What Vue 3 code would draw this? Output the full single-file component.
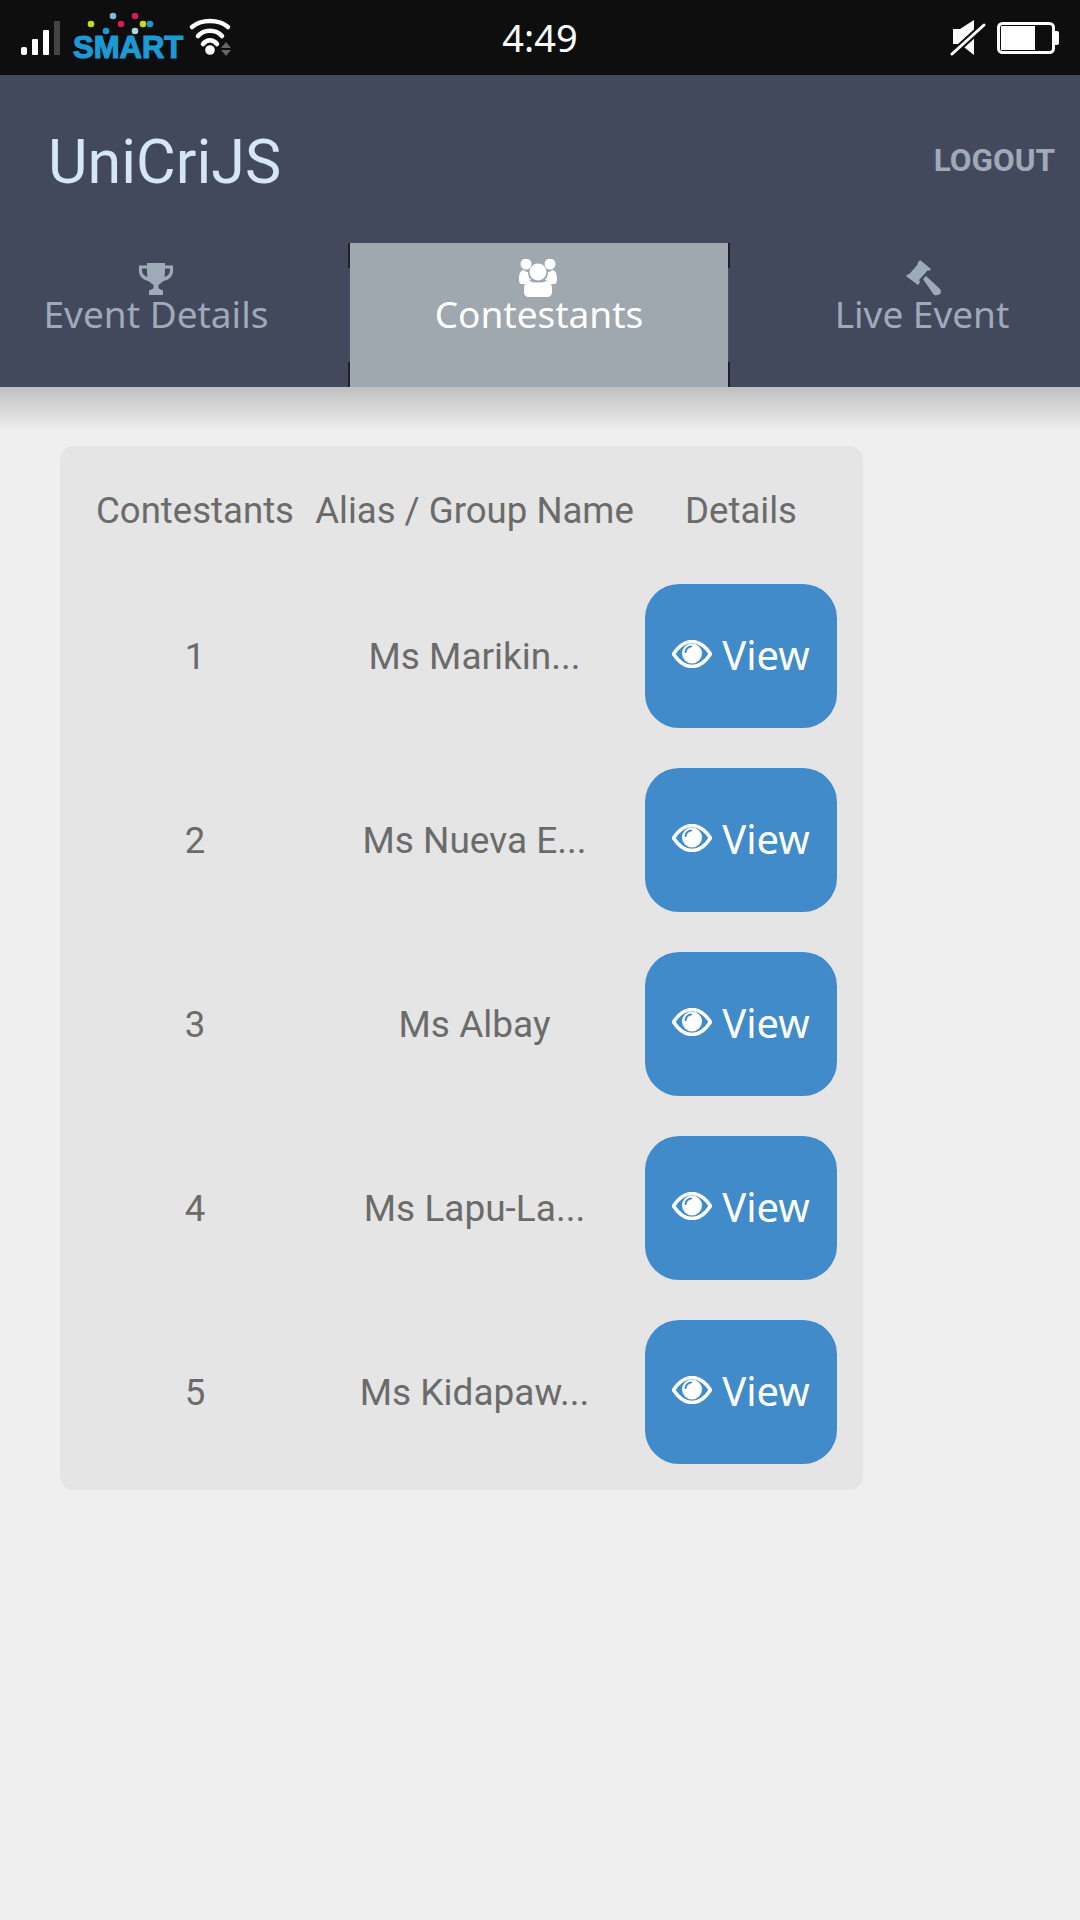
<template>
  <div class="page">
    <div class="status-bar">
      <div class="status-left">
        <svg class="signal" width="40" height="34" viewBox="0 0 40 34">
          <rect x="0" y="26" width="6" height="8" rx="2" fill="#fff" />
          <rect x="11" y="18" width="6" height="16" rx="1" fill="#fff" />
          <rect x="22" y="9" width="6" height="25" rx="1" fill="#fff" />
          <rect x="33" y="0" width="6" height="34" fill="#444" />
        </svg>
        <div class="smart">
          <svg class="dots" width="110" height="24" viewBox="0 0 110 24">
            <circle cx="18" cy="12" r="3.300" fill="#c9d820" />
            <circle cx="40" cy="4" r="3.300" fill="#7cbcdc" />
            <circle cx="48" cy="12" r="3.300" fill="#d81b5a" />
            <circle cx="62" cy="4" r="3.300" fill="#d81b5a" />
            <circle cx="70" cy="12" r="3.300" fill="#c9d820" />
            <circle cx="77" cy="12" r="3.300" fill="#1b9ad0" />
            <circle cx="33" cy="19" r="3.300" fill="#1b9ad0" />
            <circle cx="62" cy="19" r="3.300" fill="#a8dcdc" />
          </svg>
          <span class="smart-text">SMART</span>
        </div>
        <svg class="wifi" width="46" height="40" viewBox="0 0 46 40">
          <path d="M4 9 C13 1 31 1 40 9" fill="none" stroke="#fff" stroke-width="4.500" stroke-linecap="round" />
          <path d="M10 18 C16 11 28 11 34 18" fill="none" stroke="#fff" stroke-width="4.500" stroke-linecap="round" />
          <path d="M15 26 C19 21 25 21 29 26" fill="none" stroke="#fff" stroke-width="4.500" stroke-linecap="round" />
          <circle cx="22" cy="32" r="4.800" fill="#fff" />
          <path d="M33 30 h10 l-5 -6z M33 32 h10 l-5 6z" fill="#666" />
        </svg>
      </div>
      <div class="clock">4:49</div>
      <div class="status-right">
        <svg class="mute" width="36" height="38" viewBox="0 0 36 38">
          <path d="M3 10 H10 L24 1 V36 L10 25 H3 Z" fill="#fff" />
          <path d="M0 37 L35 5" stroke="#0e0e0e" stroke-width="7" />
          <path d="M2 35 L34 6" stroke="#fff" stroke-width="3" stroke-linecap="round" />
        </svg>
        <svg class="battery" width="62" height="34" viewBox="0 0 62 34">
          <rect x="1.500" y="2.500" width="55" height="29" rx="4" fill="none" stroke="#fff" stroke-width="3" />
          <rect x="4" y="5" width="34" height="24" fill="#fff" />
          <path d="M57 10 h3 a2 2 0 0 1 2 2 v10 a2 2 0 0 1 -2 2 h-3z" fill="#fff" />
        </svg>
      </div>
    </div>

    <header class="app-header">
      <div class="title-row">
        <div class="app-title">UniCriJS</div>
        <div class="logout">LOGOUT</div>
      </div>
      <div class="tabs">
        <div
          v-for="tab in tabs"
          :key="tab.label"
          class="tab"
          :class="{ active: tab.active }"
        >
          <svg class="tab-icon" viewBox="0 0 40 38" width="40" height="38" fill="currentColor">
            <path :d="tab.icon" fill-rule="evenodd" />
          </svg>
          <span class="tab-label">{{ tab.label }}</span>
        </div>
      </div>
    </header>

    <div class="content">
      <div class="card">
        <div class="cell head">Contestants</div>
        <div class="cell head">Alias / Group Name</div>
        <div class="cell head">Details</div>
        <template v-for="row in rows" :key="row.no">
          <div class="cell">{{ row.no }}</div>
          <div class="cell name">{{ row.name }}</div>
          <div class="cell">
            <button class="view-btn">
              <svg width="40" height="28" viewBox="0 0 40 28">
                <path d="M1.500 14 C8 4 14 1.500 20 1.500 C26 1.500 32 4 38.500 14 C32 24 26 26.500 20 26.500 C14 26.500 8 24 1.500 14Z" fill="none" stroke="#fff" stroke-width="3.500" />
                <circle cx="20" cy="13.500" r="10" fill="#fff" />
                <path d="M13.500 12 A6.500 6.500 0 0 1 19 6.500" fill="none" stroke="#428bca" stroke-width="2" stroke-linecap="round" />
              </svg>
              <span>View</span>
            </button>
          </div>
        </template>
      </div>
    </div>
  </div>
</template>

<script setup>
const trophy = 'M11 4 H29 V6.500 H37 V12 C37 17 33 21 27.500 22 C26 23.500 23.500 25 22.500 26 V29 C23 30 25 30.500 27 31.500 V36 H13 V31.500 C15 30.500 17 30 17.500 29 V26 C16.500 25 14 23.500 12.500 22 C7 21 3 17 3 12 V6.500 H11 Z M6 9.500 V12 C6 14.500 8 17 11.500 18 C11 15 11 12 11 9.500 Z M34 9.500 H29 C29 12 29 15 28.500 18 C32 17 34 14.500 34 12 Z'
const users = 'M12.500 5 A5.500 5.500 0 1 1 1.500 5 A5.500 5.500 0 1 1 12.500 5 Z M36.500 5 A5.500 5.500 0 1 1 25.500 5 A5.500 5.500 0 1 1 36.500 5 Z M27.500 13 A8.500 8.500 0 1 1 10.500 13 A8.500 8.500 0 1 1 27.500 13 Z M0 20 C0 14 2 11 5 11 C6 12.500 8 13 9 13 C9 16 10 19 12 21 C9 22 7 23 6 25 H2 C0.800 25 0 23 0 20 Z M38 20 C38 14 36 11 33 11 C32 12.500 30 13 29 13 C29 16 28 19 26 21 C29 22 31 23 32 25 H36 C37.200 25 38 23 38 20 Z M11 22 C13 24 25 24 27 22 C31 22 33 25 33 30 V33 C33 36 31 38 28 38 H10 C7 38 5 36 5 33 V30 C5 25 7 22 11 22 Z'
const gavel = 'M18 1 L29 10 L27.500 12 L26 11 L17 21 L18 23 L16 26 L4 17 L6 15 L7 15.500 L16 5 L15.500 4 Z M21 20 L24 17 L38 30 Q40 33 38 35 Q35 37 32 36 Z'

const tabs = [
  { label: 'Event Details', icon: trophy, active: false },
  { label: 'Contestants', icon: users, active: true },
  { label: 'Live Event', icon: gavel, active: false }
]

const rows = [
  { no: 1, name: 'Ms Marikin...' },
  { no: 2, name: 'Ms Nueva E...' },
  { no: 3, name: 'Ms Albay' },
  { no: 4, name: 'Ms Lapu-La...' },
  { no: 5, name: 'Ms Kidapaw...' }
]
</script>

<style>
html, body {
  margin: 0;
  background: #efefef;
}
</style>

<style scoped>
.page {
  width: 1080px;
  height: 1920px;
  overflow: hidden;
  background: #efefef;
  display: flex;
  flex-direction: column;
}

.status-bar {
  height: 75px;
  background: #0e0e0e;
  display: flex;
  align-items: center;
  justify-content: space-between;
  position: relative;
  color: #fff;
}

.status-left {
  display: flex;
  align-items: center;
  padding-left: 21px;
  gap: 12px;
}

.smart {
  display: flex;
  flex-direction: column;
  width: 112px;
  height: 48px;
  margin-top: -3px;
}

.smart-text {
  font-family: "Liberation Sans", sans-serif;
  font-weight: 700;
  font-size: 31px;
  line-height: 24px;
  color: #1b9ad6;
  -webkit-text-stroke: 1.2px #1b9ad6;
}

.wifi {
  margin-left: -9px;
}

.clock {
  position: absolute;
  left: 0;
  right: 0;
  text-align: center;
  font-family: "Noto Sans", sans-serif;
  font-size: 38px;
  margin-top: -1px;
}

.status-right {
  display: flex;
  align-items: center;
  gap: 11px;
  padding-right: 21px;
}

.app-header {
  height: 312px;
  background: #42495d;
  display: flex;
  flex-direction: column;
  justify-content: space-between;
  position: relative;
}

.app-header::after {
  content: "";
  position: absolute;
  left: 0;
  right: 0;
  top: 100%;
  height: 44px;
  background: linear-gradient(rgba(0, 0, 0, 0.2), rgba(0, 0, 0, 0));
}

.title-row {
  display: flex;
  align-items: center;
  justify-content: space-between;
  padding: 52px 25px 0 48px;
}

.app-title {
  font-family: Roboto, sans-serif;
  font-size: 61px;
  line-height: 70px;
  color: #d7e5f8;
}

.logout {
  font-family: Roboto, sans-serif;
  font-weight: 700;
  font-size: 31.500px;
  color: #a0a9b7;
  margin-top: -4px;
}

.tabs {
  display: flex;
  justify-content: center;
  height: 144px;
  overflow: hidden;
  margin-left: -2px;
}

.tab {
  flex: none;
  width: 382px;
  box-sizing: border-box;
  display: flex;
  flex-direction: column;
  align-items: center;
  padding-top: 16px;
  color: #9eaab8;
}

.tab:first-child {
  padding-right: 2px;
}

.tab:last-child {
  padding-left: 2px;
}

.tab.active {
  color: #fff;
  background: #9fa8af;
  border-left: 2px solid;
  border-right: 2px solid;
  border-image: linear-gradient(#1c2028 0 18%, #454c5f 18% 82%, #1c2028 82%) 1;
}

.tab-icon {
  display: block;
}

.tab-label {
  font-family: "Noto Sans", sans-serif;
  font-size: 37px;
  line-height: 44px;
  margin-top: -5px;
}

.content {
  padding: 59px 0 0 60px;
}

.card {
  width: 803px;
  box-sizing: border-box;
  padding: 30px 26px 26px;
  background: #e5e5e5;
  border-radius: 14px;
  display: grid;
  grid-template-columns: 218px 341px 192px;
  grid-auto-rows: 144px;
  grid-template-rows: 68px;
  row-gap: 40px;
  color: #6b6b6b;
  font-family: Roboto, sans-serif;
  font-size: 36.600px;
}

.cell {
  display: flex;
  align-items: center;
  justify-content: center;
  white-space: nowrap;
}

.cell.name {
  font-size: 37px;
}

.view-btn {
  width: 192px;
  height: 144px;
  border: none;
  padding: 0 0 4px;
  border-radius: 34px;
  background: #428bca;
  color: #fff;
  font-family: "Noto Sans", sans-serif;
  font-size: 40px;
  display: flex;
  align-items: center;
  justify-content: center;
  gap: 10px;
}
</style>
